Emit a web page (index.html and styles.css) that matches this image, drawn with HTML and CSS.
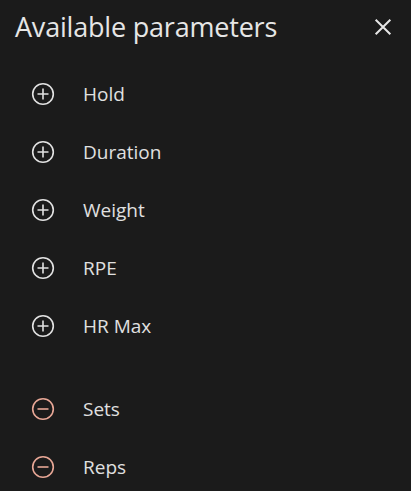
FILE: index.html
```html
<!DOCTYPE html>
<html>
<head>
<meta charset="utf-8">
<link rel="stylesheet" href="styles.css">
</head>
<body>
<div class="sheet">
  <header class="head">
    <h1 class="title">Available parameters</h1>
    <svg class="close" viewBox="0 0 24 24" width="24" height="24"><path d="M4 4L20 20M20 4L4 20" stroke="#e6e6e6" stroke-width="2.2" fill="none"/></svg>
  </header>
  <ul class="list">
    <li class="item"><svg class="ic" viewBox="0 0 24 24"><circle cx="12" cy="12" r="10.3" fill="none" stroke="#e2e2e2" stroke-width="1.6"/><path d="M12 6.5v11M6.5 12h11" stroke="#e2e2e2" stroke-width="1.6"/></svg><span>Hold</span></li>
    <li class="item"><svg class="ic" viewBox="0 0 24 24"><circle cx="12" cy="12" r="10.3" fill="none" stroke="#e2e2e2" stroke-width="1.6"/><path d="M12 6.5v11M6.5 12h11" stroke="#e2e2e2" stroke-width="1.6"/></svg><span>Duration</span></li>
    <li class="item"><svg class="ic" viewBox="0 0 24 24"><circle cx="12" cy="12" r="10.3" fill="none" stroke="#e2e2e2" stroke-width="1.6"/><path d="M12 6.5v11M6.5 12h11" stroke="#e2e2e2" stroke-width="1.6"/></svg><span>Weight</span></li>
    <li class="item"><svg class="ic" viewBox="0 0 24 24"><circle cx="12" cy="12" r="10.3" fill="none" stroke="#e2e2e2" stroke-width="1.6"/><path d="M12 6.5v11M6.5 12h11" stroke="#e2e2e2" stroke-width="1.6"/></svg><span>RPE</span></li>
    <li class="item"><svg class="ic" viewBox="0 0 24 24"><circle cx="12" cy="12" r="10.3" fill="none" stroke="#e2e2e2" stroke-width="1.6"/><path d="M12 6.5v11M6.5 12h11" stroke="#e2e2e2" stroke-width="1.6"/></svg><span>HR Max</span></li>
  </ul>
  <ul class="list used">
    <li class="item"><svg class="ic" viewBox="0 0 24 24"><circle cx="12" cy="12" r="10.3" fill="none" stroke="#e8a796" stroke-width="1.6"/><path d="M6.5 12h11" stroke="#e8a796" stroke-width="1.6"/></svg><span>Sets</span></li>
    <li class="item"><svg class="ic" viewBox="0 0 24 24"><circle cx="12" cy="12" r="10.3" fill="none" stroke="#e8a796" stroke-width="1.6"/><path d="M6.5 12h11" stroke="#e8a796" stroke-width="1.6"/></svg><span>Reps</span></li>
  </ul>
</div>
</body>
</html>
```
FILE: styles.css
```css
html, body {
  margin: 0;
  padding: 0;
  background: #1b1b1b;
}
body {
  font-family: "Open Sans", "Liberation Sans", sans-serif;
  color: #e3e3e3;
  width: 411px;
  height: 491px;
  overflow: hidden;
}
.sheet {
  display: flex;
  flex-direction: column;
}
.head {
  display: flex;
  align-items: center;
  justify-content: space-between;
  padding: 9px 17px 0 15px;
  height: 36px;
}
.title {
  margin: 0;
  font-size: 27px;
  font-weight: 400;
  letter-spacing: -0.2px;
  color: #e6e6e6;
  line-height: 36px;
}
.close {
  width: 22px;
  height: 22px;
}
.list {
  list-style: none;
  margin: 0;
  padding: 0;
}
.list:first-of-type {
  margin-top: 20px;
}
.used {
  margin-top: 25px;
}
.item {
  display: flex;
  align-items: center;
  height: 58px;
  padding-left: 31px;
  gap: 28px;
  font-size: 19px;
  font-weight: 500;
  color: #e0e0e0;
}
.ic {
  width: 24px;
  height: 24px;
  flex: none;
}
```
